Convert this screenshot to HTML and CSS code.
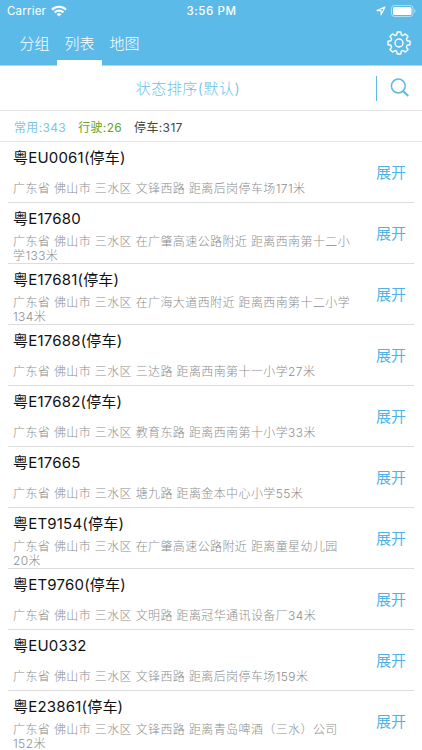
FILE: index.html
```html
<!DOCTYPE html>
<html lang="zh-CN">
<head>
  <meta charset="UTF-8">
  <meta name="viewport" content="width=device-width, initial-scale=1.0">
  <title>列表</title>
  <link rel="stylesheet" href="styles.css">
</head>
<body>
  <div class="header">
    <div class="status-bar">
      <div class="carrier">
        <span>Carrier</span>
        <svg width="16" height="12" viewBox="0 0 16 12" fill="none" stroke="#fff" stroke-width="2.2">
          <path d="M1 4.600a10 10 0 0 1 14 0M3.600 7.400a6.300 6.300 0 0 1 8.800 0"/>
          <path d="M8 11.600L5.600 9.200a3.400 3.400 0 0 1 4.800 0z" fill="#fff" stroke="none"/>
        </svg>
      </div>
      <div class="time">3:56 PM</div>
      <div class="power">
        <svg width="10" height="10" viewBox="0 0 10 10" fill="none" stroke="#fff" stroke-width="1.1" stroke-linejoin="round">
          <path d="M9 1L1 4.600h4.100v4.200z"/>
        </svg>
        <svg width="25" height="12" viewBox="0 0 25 12">
          <rect x=".5" y=".5" width="21.5" height="11" rx="3" fill="none" stroke="#fff" stroke-opacity=".5"/>
          <rect x="2" y="2" width="18.5" height="8" rx="1.6" fill="#fff"/>
          <path d="M23.200 4v4a2.200 2.200 0 0 0 0-4z" fill="#fff" fill-opacity=".5"/>
        </svg>
      </div>
    </div>
    <div class="nav">
      <div class="tab">分组</div>
      <div class="tab active">列表</div>
      <div class="tab">地图</div>
      <svg class="setting" width="24" height="24" viewBox="0 0 24 24" fill="none" stroke="#fff" stroke-width="1.4" stroke-linejoin="round">
        <path d="M10.200 1h3.600l.5 2.800 1.700.7 2.400-1.600 2.600 2.600-1.600 2.400.7 1.800 2.900.5v3.600l-2.900.5-.7 1.800 1.600 2.400-2.600 2.600-2.400-1.600-1.700.7-.5 2.800h-3.600l-.5-2.800-1.700-.7-2.400 1.600L3 18.500l1.600-2.400-.7-1.800-2.900-.5v-3.600l2.900-.5.7-1.800L3 5.500l2.600-2.600L8 4.500l1.700-.7z"/>
        <circle cx="12" cy="12" r="4"/>
      </svg>
    </div>
  </div>

  <div class="search-bar">
    <div class="sort">状态排序(默认)</div>
    <div class="search">
      <svg width="20" height="20" viewBox="0 0 20 20" fill="none" stroke="#5cb9e8">
        <circle cx="8.300" cy="8" r="6.900" stroke-width="1.500"/>
        <path d="M13.300 13.200l5 4.700" stroke-width="2"/>
      </svg>
    </div>
  </div>

  <div class="count">
    <span class="used">常用:343</span>
    <span class="running">行驶:26</span>
    <span class="parked">停车:317</span>
  </div>

  <ul class="list">
    <li class="item">
      <div class="info">
        <div class="name">粤EU0061(停车)</div>
        <div class="address single"><p>广东省 佛山市 三水区 文锋西路 距离后岗停车场171米</p></div>
      </div>
      <span class="open">展开</span>
    </li>
    <li class="item">
      <div class="info">
        <div class="name">粤E17680</div>
        <div class="address"><p>广东省 佛山市 三水区 在广肇高速公路附近 距离西南第十二小<br>学133米</p></div>
      </div>
      <span class="open">展开</span>
    </li>
    <li class="item">
      <div class="info">
        <div class="name">粤E17681(停车)</div>
        <div class="address"><p>广东省 佛山市 三水区 在广海大道西附近 距离西南第十二小学<br>134米</p></div>
      </div>
      <span class="open">展开</span>
    </li>
    <li class="item">
      <div class="info">
        <div class="name">粤E17688(停车)</div>
        <div class="address single"><p>广东省 佛山市 三水区 三达路 距离西南第十一小学27米</p></div>
      </div>
      <span class="open">展开</span>
    </li>
    <li class="item">
      <div class="info">
        <div class="name">粤E17682(停车)</div>
        <div class="address single"><p>广东省 佛山市 三水区 教育东路 距离西南第十小学33米</p></div>
      </div>
      <span class="open">展开</span>
    </li>
    <li class="item">
      <div class="info">
        <div class="name">粤E17665</div>
        <div class="address single"><p>广东省 佛山市 三水区 塘九路 距离金本中心小学55米</p></div>
      </div>
      <span class="open">展开</span>
    </li>
    <li class="item">
      <div class="info">
        <div class="name">粤ET9154(停车)</div>
        <div class="address"><p>广东省 佛山市 三水区 在广肇高速公路附近 距离童星幼儿园<br>20米</p></div>
      </div>
      <span class="open">展开</span>
    </li>
    <li class="item">
      <div class="info">
        <div class="name">粤ET9760(停车)</div>
        <div class="address single"><p>广东省 佛山市 三水区 文明路 距离冠华通讯设备厂34米</p></div>
      </div>
      <span class="open">展开</span>
    </li>
    <li class="item">
      <div class="info">
        <div class="name">粤EU0332</div>
        <div class="address single"><p>广东省 佛山市 三水区 文锋西路 距离后岗停车场159米</p></div>
      </div>
      <span class="open">展开</span>
    </li>
    <li class="item">
      <div class="info">
        <div class="name">粤E23861(停车)</div>
        <div class="address"><p>广东省 佛山市 三水区 文锋西路 距离青岛啤酒（三水）公司<br>152米</p></div>
      </div>
      <span class="open">展开</span>
    </li>
  </ul>
</body>
</html>
```
FILE: styles.css
```css
* {
  box-sizing: border-box;
}
body, ul, li, p {
  padding: 0;
  margin: 0;
  list-style-type: none;
}
body {
  height: 750px;
  overflow: hidden;
  background: #fff;
  font-family: Inter, "Noto Sans CJK SC", sans-serif;
}
svg {
  display: block;
}
.header {
  height: 66px;
  background: #5cbae9;
  border-bottom: 1px solid #a5dcf8;
  color: #fff;
}
.status-bar {
  display: grid;
  grid-template-columns: 1fr auto 1fr;
  align-items: center;
  height: 22px;
  padding: 0 6px 0 7px;
  font-size: 11.5px;
}
.carrier, .power {
  display: flex;
  align-items: center;
  gap: 5px;
}
.carrier {
  letter-spacing: .2px;
}
.power {
  justify-content: flex-end;
}
.time {
  font-weight: 500;
  letter-spacing: .6px;
}
.nav {
  display: flex;
  height: 44px;
  padding-left: 12px;
}
.tab {
  width: 45px;
  line-height: 43px;
  text-align: center;
  font-size: 15px;
  font-weight: 300;
}
.tab.active {
  border-bottom: 6px solid #fff;
}
.setting {
  margin: 9px 11px 0 auto;
}
.search-bar {
  display: flex;
  align-items: center;
  height: 45px;
  border-bottom: 1px solid #e3e5e6;
}
.sort {
  width: 376px;
  padding-bottom: 2px;
  text-align: center;
  color: #6ebfe8;
  font-size: 15px;
  font-weight: 300;
  letter-spacing: .5px;
}
.search {
  display: flex;
  align-items: center;
  height: 25px;
  padding-left: 13px;
  border-left: 1px solid #5cb9e8;
}
.count {
  display: flex;
  align-items: center;
  gap: 12px;
  height: 31px;
  padding-left: 14px;
  border-bottom: 1px solid #e3e5e6;
  font-size: 12px;
  letter-spacing: .35px;
}
.used {
  color: #7cc5ea;
}
.running {
  color: #62a51c;
}
.parked {
  color: #444;
}
.list {
  padding: 0 8px;
}
.item {
  display: flex;
  align-items: center;
  height: 61px;
  border-bottom: 1px solid #dcdcdc;
}
.info {
  width: 368px;
  height: 60px;
  padding-left: 5px;
}
.name {
  height: 31px;
  line-height: 31px;
  color: #111;
  font-size: 15px;
  letter-spacing: .2px;
}
.address {
  display: flex;
  align-items: center;
  height: 30px;
  color: #8e8e8e;
  font-size: 12px;
  font-weight: 300;
  line-height: 14px;
  letter-spacing: .4px;
  word-spacing: -.1px;
  white-space: nowrap;
}
.address.single {
  height: 32px;
}
.open {
  padding-bottom: 2px;
  color: #4fb3e8;
  font-size: 15px;
}
```
